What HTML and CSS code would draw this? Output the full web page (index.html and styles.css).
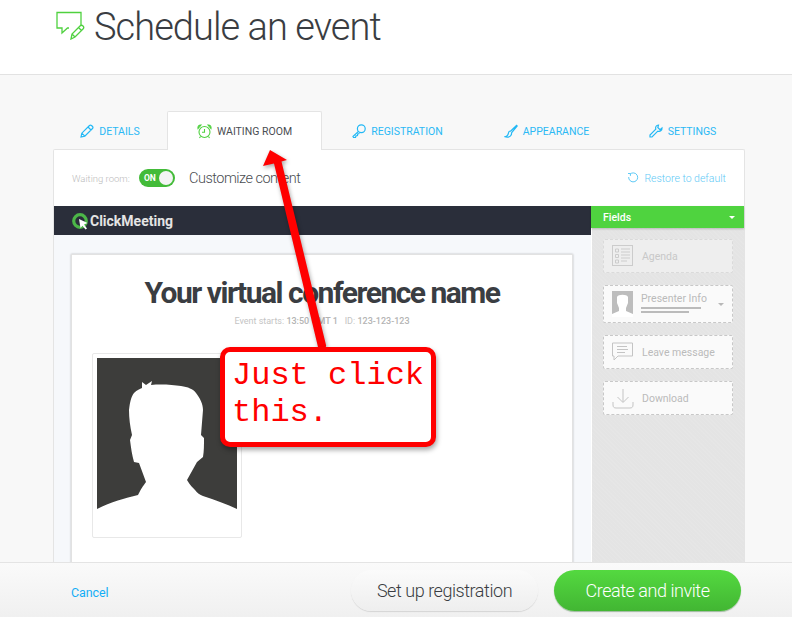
FILE: index.html
```html
<!DOCTYPE html>
<html lang="en">
<head>
  <meta charset="UTF-8" />
  <title>Schedule an event</title>
  <link rel="stylesheet" href="styles.css">
</head>
<body>
  <header class="page-header">
    <svg class="page-icon" width="30" height="30" viewBox="0 0 30 30" fill="none" stroke="#4fd13f" stroke-width="1.3">
      <path d="M14 18H12.500L7 23v-5H2V2.500h24V15"/>
      <path d="M16 29l1-5 8-8c1-1 2-1 3 0s1 2 0 3l-8 8zM23.500 17.500l3 3M17 24l3 3"/>
    </svg>
    <h1 class="page-title">Schedule an event</h1>
  </header>

  <main class="content">
    <nav class="tabs">
      <a class="tab tab-details">
        <svg width="14" height="14" viewBox="0 0 14 14" fill="none" stroke="#22b8f5" stroke-width="1.2"><path d="M1 13l.8-3.800L9.500 1.500c.6-.6 1.300-.6 2 0l1 1c.6.7.6 1.400 0 2L4.800 12.200zM8 3l3 3M1.800 9.200l3 3"/></svg>
        Details
      </a>
      <a class="tab tab-room active">
        <svg width="15" height="15" viewBox="0 0 15 15" fill="none" stroke="#4fd13f" stroke-width="1.1"><circle cx="7.500" cy="8" r="5.500"/><path d="M7.500 5v3.300H5M1 4.500C.5 2.500 2 .8 4 1zM14 4.500C14.500 2.500 13 .8 11 1zM3.500 12.500L2.500 14M11.500 12.500l1 1.500"/></svg>
        Waiting room
      </a>
      <a class="tab tab-reg">
        <svg width="14" height="14" viewBox="0 0 14 14" fill="none" stroke="#22b8f5" stroke-width="1.2"><circle cx="9.300" cy="4.700" r="3.900"/><path d="M6.500 7.400L1 12.500 1.500 13.500H3.500L4 11.800 5.500 11.500 5.700 10 7.500 9.500"/></svg>
        Registration
      </a>
      <a class="tab tab-look">
        <svg width="14" height="14" viewBox="0 0 14 14" fill="none" stroke="#22b8f5" stroke-width="1.2"><path d="M13 1L6.200 7.500M13.500 1.500L7.500 8.800M6 7C3.800 7.500 5 10 3.500 11.300 3 11.800 2 12.500 1 12.800c2 .8 5 .4 6-1.500.6-1 .7-2 .4-3"/></svg>
        Appearance
      </a>
      <a class="tab tab-set">
        <svg width="14" height="14" viewBox="0 0 14 14" fill="none" stroke="#22b8f5" stroke-width="1.2"><path d="M9.500 1C7.500 1 6 3 6.800 5.200L1 11v2h2l5.800-5.800C11 8 13.200 6.500 13 4L11 5.700 8.800 3.500z"/></svg>
        Settings
      </a>
    </nav>

    <section class="panel">
      <div class="toolbar">
        <span class="room-label">Waiting room:</span>
        <span class="toggle"><span class="toggle-text">ON</span><span class="toggle-knob"></span></span>
        <span class="customize">Customize content</span>
        <a class="restore">
          <svg width="12" height="12" viewBox="0 0 12 12" fill="none" stroke="#5fcaf6" stroke-width="1"><path d="M3 2.200A4.500 4.500 0 1 1 1.700 5M1 1.500h2.400v2.400"/></svg>
          Restore to default
        </a>
      </div>

      <div class="editor">
        <div class="preview">
          <div class="brand-bar">
            <svg width="18" height="18" viewBox="0 0 18 18"><circle cx="9" cy="9" r="6.300" fill="none" stroke="#4cb648" stroke-width="3.200"/><path d="M8 7l8.500 4-3.500 1.500 3 4-1.500 1-3-3.800-2 2.300z" fill="#fff"/></svg>
            <span class="brand-name">ClickMeeting</span>
          </div>
          <div class="preview-body">
            <div class="room-card">
              <h2 class="room-title">Your virtual conference name</h2>
              <p class="room-meta">Event starts: <b>13:50 GMT 1</b> &nbsp; ID: <b>123-123-123</b></p>
              <div class="photo">
                <svg width="140" height="172" viewBox="0 0 140 172">
                  <rect width="140" height="172" fill="#fff"/>
                  <rect width="140" height="152" fill="#3d3d3b"/>
                  <path d="M0 151C14 144 28 140 41 137 44 131 46 128 49 124L42 105 37 104C35 97 34 90 33 82L35 77C33 68 32 60 32 52 33 44 34 39 37 35 40 32 43 31 45 30L45 24 49 27 55 23 54 27C65 26 76 27 84 28 91 29 96 31 99 35 103 40 106 46 106 52L104 77 107 80C107 87 107 93 106 99L100 104 90 122C93 127 96 130 98 132 100 135 103 137 106 138 118 142 130 146 140 151V172H0z" fill="#fff"/>
                </svg>
              </div>
            </div>
          </div>
        </div>

        <aside class="fields">
          <div class="fields-head">Fields <span class="caret"></span></div>
          <div class="field-list">
            <div class="field field-off">
              <svg width="22" height="22" viewBox="0 0 22 22" fill="none" stroke="#ccc"><rect x=".5" y=".5" width="20" height="20"/><path d="M3.500 4h3v3h-3zM3.500 9.500h3v3h-3zM3.500 15h3v3h-3zM9 4h9M9 7h9M9 10h9M9 13h9M9 16h6"/></svg>
              <span>Agenda</span>
            </div>
            <div class="field field-presenter">
              <svg width="21" height="26" viewBox="0 0 21 26"><rect width="21" height="26" fill="#bdbdbd"/><path d="M0 26v-3l7-3v-3L5 12V6c1-3 10-3 11 0v6l-2 5v3l7 3v3z" fill="#fff"/></svg>
              <div class="presenter-lines">
                <span>Presenter Info</span>
                <i class="line-long"></i>
                <i class="line-short"></i>
              </div>
              <span class="caret caret-grey"></span>
            </div>
            <div class="field">
              <svg width="22" height="20" viewBox="0 0 22 20" fill="none" stroke="#c4c4c4"><path d="M.5 1h20v13H6l-4 4v-4H.5zM5 4.500h10M5 7.500h11M5 10.500h8"/></svg>
              <span>Leave message</span>
            </div>
            <div class="field">
              <svg width="22" height="22" viewBox="0 0 22 22" fill="none" stroke="#c4c4c4"><path d="M11 2v13M5.500 10l5.500 5.500 5.500-5.500M1 15v3c0 2 1 3 3 3h14c2 0 3-1 3-3v-3"/></svg>
              <span>Download</span>
            </div>
          </div>
        </aside>
      </div>
    </section>
  </main>

  <footer class="page-footer">
    <a class="cancel">Cancel</a>
    <div class="footer-actions">
      <button class="btn btn-plain">Set up registration</button>
      <button class="btn btn-green">Create and invite</button>
    </div>
  </footer>

  <!-- screenshot annotation on top of the page -->
  <svg class="arrow" width="792" height="617" viewBox="0 0 792 617">
    <path d="M270 150L287 160 281.500 161.500 326 345C327 350 319 351 318 347L274 163.500 263 166z" fill="#f00"/>
  </svg>
  <div class="callout">Just click<br>this.</div>
</body>
</html>
```

FILE: styles.css
```css
* {
  margin: 0;
  padding: 0;
  box-sizing: border-box;
}

html, body {
  height: 617px;
  overflow: hidden;
}

body {
  position: relative;
  display: flex;
  flex-direction: column;
  font-family: Roboto, sans-serif;
  background-color: #f8f8f8;
  color: #3a3d42;
}

.page-header {
  flex: none;
  height: 75px;
  display: flex;
  align-items: flex-start;
  gap: 9px;
  padding: 10px 0 0 55px;
  background-color: white;
  border-bottom: 1px solid #e2e2e2;
}

.page-title {
  font-size: 38px;
  font-weight: 300;
  line-height: 34px;
  letter-spacing: -0.95px;
}

.content {
  flex: 1;
  min-height: 0;
  overflow: hidden;
  padding: 36px 47px 0 53px;
}

.tabs {
  display: flex;
  height: 38px;
}

.tab {
  display: flex;
  align-items: center;
  justify-content: center;
  gap: 5px;
  height: 39px;
  padding-top: 1px;
  font-size: 10.500px;
  font-weight: 400;
  text-transform: uppercase;
  color: #2bb9f5;
}

.tab-details { width: 114px; }
.tab-room { width: 155px; }
.tab-reg { width: 151px; }
.tab-look { width: 147px; }
.tab-set { width: 125px; }

.tab.active {
  position: relative;
  color: #4a4d52;
  background-color: white;
  border: 1px solid #e4e4e4;
  border-bottom: none;
  border-radius: 2px 2px 0 0;
  z-index: 1;
}

.panel {
  height: 500px;
  background-color: white;
  border: 1px solid #e4e4e4;
  border-bottom: none;
  border-radius: 2px 2px 0 0;
}

.toolbar {
  height: 56px;
  display: flex;
  align-items: center;
  padding: 0 18px;
  font-weight: 300;
}

.room-label {
  font-size: 9.500px;
  color: #bbb;
  width: 67px;
}

.toggle {
  width: 36px;
  height: 18px;
  display: flex;
  align-items: center;
  justify-content: space-between;
  padding: 0 2px 0 5px;
  border-radius: 9px;
  background-color: #43bb39;
}

.toggle-text {
  font-size: 8.500px;
  font-weight: 700;
  color: white;
}

.toggle-knob {
  width: 14px;
  height: 14px;
  border-radius: 50%;
  background-color: #f4f4f4;
}

.customize {
  margin-left: 14px;
  font-size: 14.500px;
  letter-spacing: -0.5px;
  color: #4a4d52;
}

.restore {
  margin-left: auto;
  display: flex;
  align-items: center;
  gap: 5px;
  font-size: 10.500px;
  color: #5fcaf6;
}

.editor {
  display: flex;
  height: 443px;
}

.preview {
  width: 537px;
  background-color: #f6f8fb;
}

.brand-bar {
  height: 29px;
  display: flex;
  align-items: center;
  gap: 1px;
  padding-left: 17px;
  background-color: #2a2e3a;
}

.brand-name {
  font-size: 14px;
  font-weight: 700;
  color: #e4e4e4;
}

.preview-body {
  padding: 19px 18px 0 17px;
}

.room-card {
  height: 400px;
  padding: 21px 20px 0;
  background-color: white;
  border: 1px solid #e2e2e2;
  box-shadow: 0 0 2px rgba(0, 0, 0, 0.25);
}

.room-title {
  text-align: center;
  font-size: 30px;
  font-weight: 700;
  line-height: 34px;
  letter-spacing: -1.5px;
}

.room-meta {
  margin-top: 5px;
  text-align: center;
  font-size: 9px;
  line-height: 12px;
  color: #c4c4c4;
}

.room-meta b {
  font-weight: 500;
  color: #b4b4b4;
}

.photo {
  width: 150px;
  height: 185px;
  margin-top: 26px;
  padding: 4px;
  border: 1px solid #e8e8e8;
  border-radius: 2px;
  overflow: hidden;
}

.photo svg {
  display: block;
}

.fields {
  width: 152px;
  margin-left: 1px;
  background-color: #e4e4e4;
  background-image: repeating-linear-gradient(45deg, rgba(255, 255, 255, 0.07) 0 1px, transparent 1px 3px);
}

.fields-head {
  height: 22px;
  display: flex;
  align-items: center;
  justify-content: space-between;
  margin-left: -1px;
  padding: 0 9px 0 12px;
  font-size: 10.500px;
  font-weight: 500;
  color: white;
  background-color: #4fd33f;
  box-shadow: 0 1px 2px rgba(0, 0, 0, 0.2);
}

.caret {
  width: 0;
  height: 0;
  border-left: 3.500px solid transparent;
  border-right: 3.500px solid transparent;
  border-top: 3.500px solid white;
}

.caret-grey {
  border-top-color: #b8b8b8;
  margin-left: auto;
  margin-right: 8px;
}

.field-list {
  display: flex;
  flex-direction: column;
  gap: 12px;
  padding: 11px 11px 0;
}

.field {
  height: 34px;
  display: flex;
  align-items: center;
  gap: 8px;
  padding-left: 8px;
  font-size: 10.500px;
  color: #bbb;
  background-color: #fafafa;
  border: 1px dashed #c8c8c8;
  border-radius: 2px;
}

.field-off {
  background-color: #eee;
  border-color: #dadada;
  color: #c8c8c8;
}

.field-presenter {
  height: 38px;
}

.presenter-lines {
  display: flex;
  flex-direction: column;
  margin-top: -4px;
}

.presenter-lines i {
  display: block;
  height: 2px;
  margin-top: 2px;
  background-color: #bbb;
}

.line-long { width: 60px; }
.line-short { width: 48px; }

.page-footer {
  flex: none;
  height: 55px;
  display: flex;
  align-items: center;
  justify-content: space-between;
  padding: 0 51px 0 71px;
  background: linear-gradient(#fafafa, #f0f0f0);
  border-top: 1px solid #e4e4e4;
}

.cancel {
  margin-top: 5px;
  font-size: 12.500px;
  letter-spacing: -0.1px;
  color: #14aef5;
}

.footer-actions {
  display: flex;
  gap: 16px;
}

.btn {
  width: 187px;
  height: 41px;
  border: none;
  border-radius: 21px;
  font-family: Roboto, sans-serif;
  font-size: 18px;
  font-weight: 300;
  letter-spacing: -0.45px;
}

.btn-plain {
  color: #3a3d42;
  background: linear-gradient(#fbfbfb, #eeeeee);
  box-shadow: 0 1px 1px rgba(0, 0, 0, 0.12);
}

.btn-green {
  color: white;
  background: linear-gradient(#54d940, #42b633);
  box-shadow: 0 1px 1px rgba(0, 80, 0, 0.35);
}

.arrow {
  position: absolute;
  left: 0;
  top: 0;
  filter: drop-shadow(1px 2px 2px rgba(0, 0, 0, 0.35));
}

.callout {
  position: absolute;
  left: 220px;
  top: 347px;
  width: 216px;
  height: 100px;
  padding: 5px 0 0 7px;
  font-family: "Liberation Mono", monospace;
  font-size: 32px;
  line-height: 37px;
  color: #f00;
  background-color: white;
  border: 5px solid #f00;
  border-radius: 10px;
  box-shadow: 1px 3px 5px rgba(0, 0, 0, 0.35);
}
```
